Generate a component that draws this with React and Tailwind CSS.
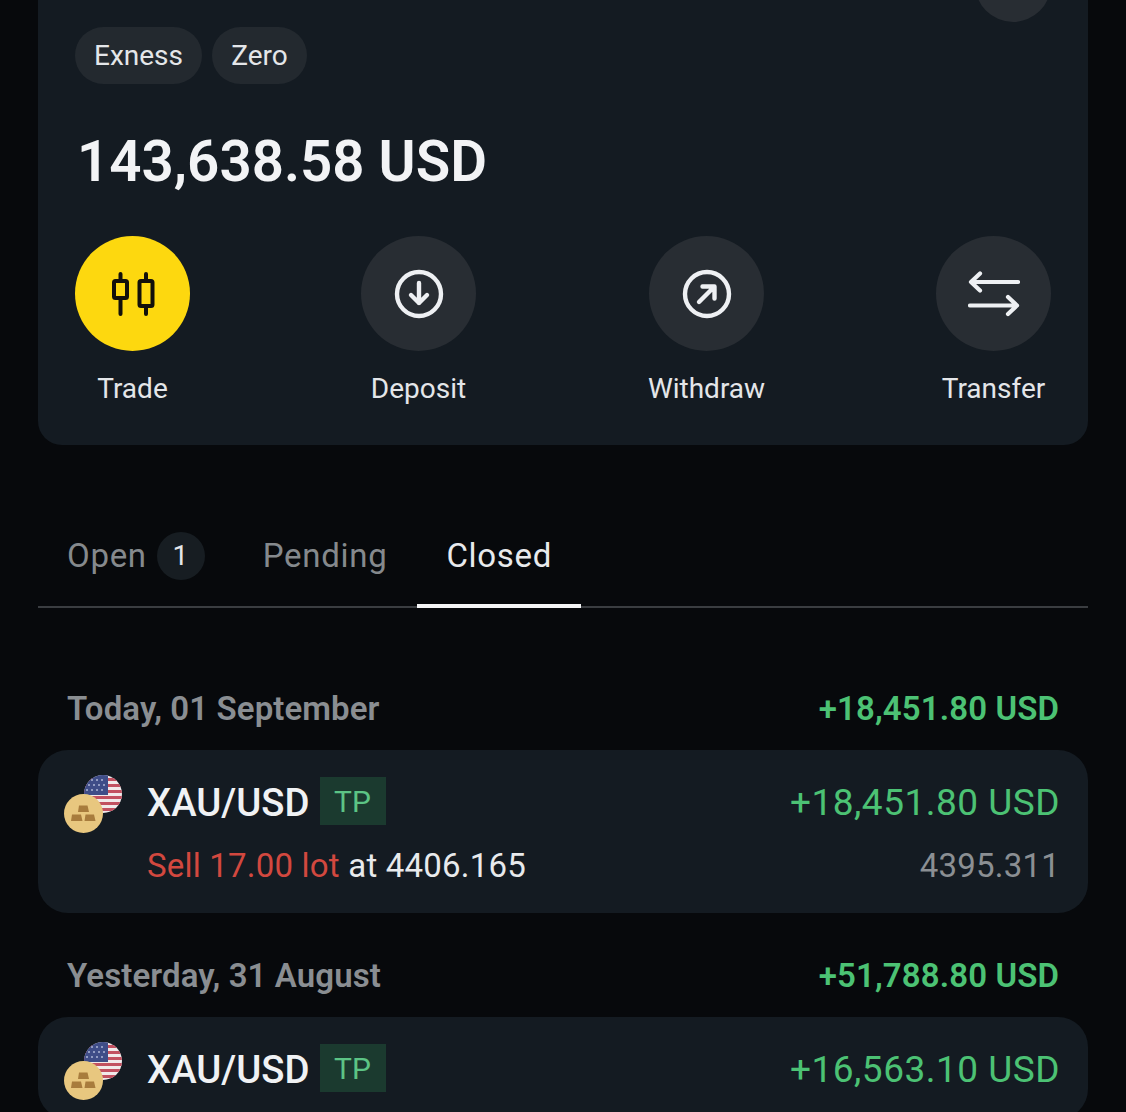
import React from "react";

const font = { fontFamily: "Roboto, 'Noto Sans', sans-serif" };

function Candles() {
  return (
    <svg width="50" height="50" viewBox="0 0 50 50" fill="none" stroke="#12100a" strokeWidth="4" strokeLinecap="round">
      <path d="M12.5 5V45M38 5V45" />
      <rect x="6" y="12" width="13" height="17" rx="1.5" fill="#fdd80f" />
      <rect x="31.5" y="12" width="13" height="25" rx="1.5" fill="#fdd80f" />
    </svg>
  );
}
function CircleDown() {
  return (
    <svg width="50" height="50" viewBox="0 0 50 50" fill="none" stroke="#eef0f3" strokeWidth="4.4" strokeLinecap="round" strokeLinejoin="round">
      <circle cx="25" cy="25" r="22" />
      <path d="M25 14V34M17 26L25 34L33 26" />
    </svg>
  );
}
function CircleOut() {
  return (
    <svg width="50" height="50" viewBox="0 0 50 50" fill="none" stroke="#eef0f3" strokeWidth="4.4" strokeLinecap="round" strokeLinejoin="round">
      <circle cx="25" cy="25" r="22" />
      <path d="M17 33L32 18M20.5 17.5H32.5V29.5" />
    </svg>
  );
}
function TransferIcon() {
  return (
    <svg width="52" height="46" viewBox="0 0 52 46" fill="none" stroke="#eef0f3" strokeWidth="4.2" strokeLinecap="round" strokeLinejoin="round">
      <path d="M50 11H3M12 2.5L3 11L12 19.5" />
      <path d="M2 34.5H49M40 26L49 34.5L40 43" />
    </svg>
  );
}

function PairIcon({ id }) {
  return (
    <div className="relative w-[60px] h-[60px] shrink-0">
      <svg className="absolute left-[20px] top-0" width="38" height="38" viewBox="0 0 38 38">
        <defs>
          <clipPath id={id}><circle cx="19" cy="19" r="19" /></clipPath>
        </defs>
        <g clipPath={`url(#${id})`}>
          <rect width="38" height="38" fill="#f1e9ea" />
          <path d="M0 3H38V6H0ZM0 9H38V12H0ZM0 15H38V18H0ZM0 21H38V24H0ZM0 27H38V30H0ZM0 33H38V36H0Z" fill="#c25060" />
          <rect width="24" height="20" fill="#3f4d88" />
          <g fill="#aeb6d6">
            <circle cx="8" cy="5" r="1" /><circle cx="13" cy="5" r="1" /><circle cx="18" cy="5" r="1" />
            <circle cx="5" cy="10" r="1" /><circle cx="10" cy="10" r="1" /><circle cx="15" cy="10" r="1" /><circle cx="20" cy="10" r="1" />
            <circle cx="3" cy="15" r="1" /><circle cx="8" cy="15" r="1" /><circle cx="13" cy="15" r="1" /><circle cx="18" cy="15" r="1" />
          </g>
        </g>
      </svg>
      <svg className="absolute left-0 top-[19px]" width="39" height="39" viewBox="0 0 39 39">
        <circle cx="19.5" cy="19.5" r="19.5" fill="#e8c77f" />
        <path d="M15 11.5H23.5L25 18H14ZM8 20.5H17L18.5 27H7ZM21.5 20.5H30L31.5 27H20.5Z" fill="#a87c3d" />
      </svg>
    </div>
  );
}

function Action({ label, yellow, className, children }) {
  return (
    <div className={`flex flex-col items-center w-[115px] ${className || ""}`}>
      <div className={`w-[115px] h-[115px] rounded-full flex items-center justify-center ${yellow ? "bg-[#fdd80f]" : "bg-[#282d33]"}`}>
        {children}
      </div>
      <div className="mt-[21px] h-[34px] leading-[34px] text-[28px] text-[#e4e6e9] whitespace-nowrap">{label}</div>
    </div>
  );
}

function DateRow({ label, value, className }) {
  return (
    <div className={`flex items-center justify-between h-[40px] px-[29px] ${className}`}>
      <span className="text-[33px] font-semibold tracking-[0.1px] text-[#8a8e92]">{label}</span>
      <span className="text-[33px] font-semibold tracking-[0.1px] text-[#4cc274]">{value}</span>
    </div>
  );
}

function TradeCard({ id, value, close }) {
  return (
    <div className="mt-[21px] mx-[38px] rounded-[30px] bg-[#141b22] pt-[27px] pb-[27px] pr-[28px] pl-[26px]">
      <div className="flex items-center justify-between h-[48px]">
        <div className="flex items-center">
          <div className="w-[83px] mt-[8px]"><PairIcon id={id} /></div>
          <span className="pt-[4px] text-[38.3px] font-medium text-[#f0f2f4]">XAU/USD</span>
          <span className="ml-[10px] w-[66px] h-[48px] flex items-center justify-center bg-[#1b3a2f] text-[#5cc485] text-[30px]">TP</span>
        </div>
        <span className="pt-[4px] text-[37px] text-[#4cc274] tracking-[0.5px]">{value}</span>
      </div>
      {close && (
        <div className="flex items-center justify-between h-[40px] mt-[21px]">
          <div className="pl-[83px] text-[33px] tracking-[0.2px]">
            <span className="text-[#d2483f]">Sell 17.00 lot</span>
            <span className="text-[#e8eaec]"> at 4406.165</span>
          </div>
          <span className="text-[33px] text-[#8b8f93] tracking-[0.2px]">{close}</span>
        </div>
      )}
    </div>
  );
}

export default function App() {
  return (
    <div style={font} className="w-[1126px] h-[1112px] overflow-hidden bg-[#07090c]">
      <div className="relative mx-[38px] rounded-b-[24px] bg-[#141b22] pt-[27px] pb-[39px] px-[37px]">
        <div className="absolute left-[937px] -top-[54px] w-[76px] h-[76px] rounded-full bg-[#282d33]" />
        <div className="flex gap-[10px]">
          <span className="h-[57px] w-[127px] rounded-full bg-[#23292f] flex items-center justify-center text-[28px] text-[#e4e6e9]">Exness</span>
          <span className="h-[57px] w-[95px] rounded-full bg-[#23292f] flex items-center justify-center text-[28px] text-[#e4e6e9]">Zero</span>
        </div>
        <div className="mt-[45px] h-[66px] leading-[66px] pl-[2px] text-[56.5px] font-semibold text-[#f2f3f5]">143,638.58 USD</div>
        <div className="mt-[41px] flex">
          <Action label="Trade" yellow><Candles /></Action>
          <Action label="Deposit" className="ml-[171px]"><CircleDown /></Action>
          <Action label="Withdraw" className="ml-[173px]"><CircleOut /></Action>
          <Action label="Transfer" className="ml-[172px]"><TransferIcon /></Action>
        </div>
      </div>

      <div className="mt-[65px] mx-[38px] h-[98px] border-b-2 border-[#3a3d41] pb-[4px] flex items-center pl-[29px] text-[33px] tracking-[0.7px]">
        <span className="text-[#85898d]">Open</span>
        <span className="ml-[10px] w-[48px] h-[48px] rounded-full bg-[#171d22] flex items-center justify-center text-[28px] text-[#e4e6e9]">1</span>
        <span className="ml-[58px] text-[#85898d]">Pending</span>
        <span className="relative ml-[30px] px-[29px] text-[#e8eaec]">
          Closed
          <span className="absolute left-0 right-0 -bottom-[27px] h-[4px] bg-[#f4f5f6]" />
        </span>
      </div>

      <DateRow className="mt-[81px] mx-[38px]" label="Today, 01 September" value="+18,451.80 USD" />
      <TradeCard id="f1" value="+18,451.80 USD" close="4395.311" />
      <DateRow className="mt-[43px] mx-[38px]" label="Yesterday, 31 August" value="+51,788.80 USD" />
      <TradeCard id="f2" value="+16,563.10 USD" />
    </div>
  );
}
